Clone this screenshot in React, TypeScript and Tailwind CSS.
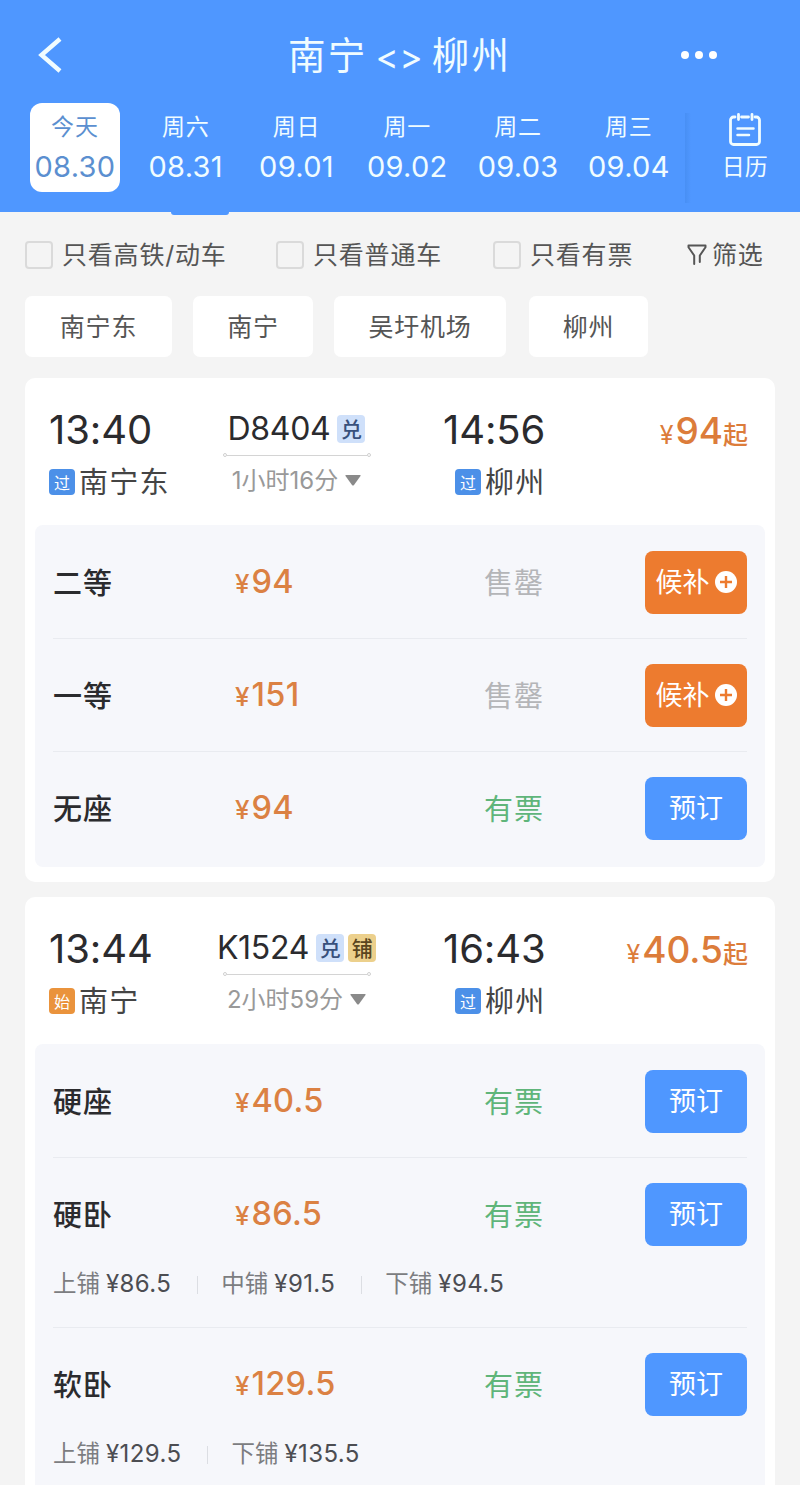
import React from 'react';
import { clsx } from 'clsx';

type Tag = { text: string; className: string };
type Berth = { name: string; price: string };
type Seat = { name: string; price: string; soldOut?: boolean; berths?: Berth[] };
type Stop = { time: string; mark: string; station: string };
type Train = {
  code: string;
  tags: Tag[];
  duration: string;
  from: Stop;
  to: Stop;
  lowest: string;
  seats: Seat[];
};

const DAYS = [
  { week: '今天', date: '08.30' },
  { week: '周六', date: '08.31' },
  { week: '周日', date: '09.01' },
  { week: '周一', date: '09.02' },
  { week: '周二', date: '09.03' },
  { week: '周三', date: '09.04' },
];

const FILTERS = [
  { label: '只看高铁/动车', className: 'w-[251px]' },
  { label: '只看普通车', className: 'w-[217px]' },
  { label: '只看有票', className: 'w-[194px]' },
];

const STATIONS = [
  { label: '南宁东', className: 'w-[147px]' },
  { label: '南宁', className: 'ml-[21px] w-[120px]' },
  { label: '吴圩机场', className: 'ml-[21px] w-[172px]' },
  { label: '柳州', className: 'ml-[23px] w-[119px]' },
];

const POINTS: Tag = { text: '兑', className: 'bg-[#cfe0fa] text-[#38507c]' };
const SLEEPER: Tag = { text: '铺', className: 'bg-[#ecd08c] text-[#5a4520]' };

const TRAINS: Train[] = [
  {
    code: 'D8404',
    tags: [POINTS],
    duration: '1小时16分',
    from: { time: '13:40', mark: '过', station: '南宁东' },
    to: { time: '14:56', mark: '过', station: '柳州' },
    lowest: '94',
    seats: [
      { name: '二等', price: '94', soldOut: true },
      { name: '一等', price: '151', soldOut: true },
      { name: '无座', price: '94' },
    ],
  },
  {
    code: 'K1524',
    tags: [POINTS, SLEEPER],
    duration: '2小时59分',
    from: { time: '13:44', mark: '始', station: '南宁' },
    to: { time: '16:43', mark: '过', station: '柳州' },
    lowest: '40.5',
    seats: [
      { name: '硬座', price: '40.5' },
      {
        name: '硬卧',
        price: '86.5',
        berths: [
          { name: '上铺', price: '86.5' },
          { name: '中铺', price: '91.5' },
          { name: '下铺', price: '94.5' },
        ],
      },
      {
        name: '软卧',
        price: '129.5',
        berths: [
          { name: '上铺', price: '129.5' },
          { name: '下铺', price: '135.5' },
        ],
      },
    ],
  },
];

const CalendarIcon = () => (
  <svg width="34" height="34" viewBox="0 0 34 34" fill="none" stroke="currentColor" strokeWidth="2.8" strokeLinecap="round">
    <path d="M7 4H5.500a3 3 0 0 0-3 3v21.500a3 3 0 0 0 3 3h23a3 3 0 0 0 3-3V7a3 3 0 0 0-3-3h-1.500M13.500 4h7" />
    <path d="M10.500 1.500v5M24 1.500v5" />
    <path d="M9.500 15.500h16M9.500 22h11.500" strokeWidth="2.500" />
  </svg>
);

const FilterIcon = () => (
  <svg width="20" height="22" viewBox="0 0 20 22" fill="none" stroke="currentColor" strokeWidth="2" strokeLinejoin="round" strokeLinecap="round">
    <path d="M7.200 20V11.500L1.500 3.300V1.500h17v1.800L12.800 11.500V18" />
  </svg>
);

const PlusBadge = () => (
  <svg width="22" height="22" viewBox="0 0 22 22">
    <circle cx="11" cy="11" r="11" fill="#fff" />
    <path d="M11 5v12M5 11h12" stroke="#ed7b2f" strokeWidth="2.400" />
  </svg>
);

const Header = () => (
  <header className="relative h-[212px] bg-[#4f97ff] text-[#f0fcff]">
    <div className="flex h-[103px] items-center pt-[6px]">
      <svg className="ml-[38px]" width="24" height="36" viewBox="0 0 24 36" fill="none" stroke="currentColor" strokeWidth="4.400">
        <path d="M22 2L3.500 18L22 34" />
      </svg>
      <h1 className="ml-[226px] flex w-[226px] items-center pt-[2px] text-[37.500px] leading-none">
        <span className="tracking-[2.200px]">南宁</span>
        <span className="ml-[8px] pt-[2px] text-[35px] leading-none tracking-[1px]">&lt;&gt;</span>
        <span className="ml-[8px] tracking-[2.200px]">柳州</span>
      </h1>
      <div className="ml-[167px] flex gap-[6px]">
        <i className="size-[8px] rounded-full bg-white" />
        <i className="size-[8px] rounded-full bg-white" />
        <i className="size-[8px] rounded-full bg-white" />
      </div>
    </div>
    <div className="flex h-[89px] pl-[20px]">
      {DAYS.map((day, i) => (
        <div key={day.date} className="flex w-[110.800px] justify-center">
          <div
            className={clsx(
              'flex w-[90px] flex-col items-center rounded-[12px] pt-[12px]',
              i === 0 && 'bg-white text-[#5b8fd0]',
            )}
          >
            <span className="mr-px text-[23px] leading-[24px] tracking-[0.800px]">{day.week}</span>
            <span className="mt-[12px] mr-px text-[29px] leading-[32px] tracking-[0.300px]">{day.date}</span>
          </div>
        </div>
      ))}
      <div className="mt-[10px] h-[90px] w-[6px] bg-linear-to-r from-[#488ff4] to-[#4f97ff]" />
      <div className="ml-[31px] flex flex-col items-center pt-[10px]">
        <CalendarIcon />
        <span className="mt-[8px] text-[23px] leading-[24px]">日历</span>
      </div>
    </div>
    <div className="absolute top-[212px] left-[171px] h-[3px] w-[58px] rounded-b-[3px] bg-[#4f97ff]" />
  </header>
);

const StationMark = ({ mark }: { mark: string }) => (
  <span
    className={clsx(
      'flex size-[26px] items-center justify-center rounded-[4px] pt-px text-[16px] leading-none text-white',
      mark === '始' ? 'bg-[#ea933c]' : 'bg-[#4c90e8]',
    )}
  >
    {mark}
  </span>
);

const StopInfo = ({ stop, className }: { stop: Stop; className?: string }) => (
  <div>
    <p className="text-[40px] leading-[48px] tracking-[-0.100px] text-[#2b2b2e]">{stop.time}</p>
    <div className={clsx('mt-[14px] flex items-center gap-[4px]', className)}>
      <StationMark mark={stop.mark} />
      <span className="pt-[2px] text-[29px] leading-[26px] tracking-[1.200px] text-[#444]">{stop.station}</span>
    </div>
  </div>
);

const SeatRow = ({ seat, last }: { seat: Seat; last: boolean }) => (
  <div className={clsx('mx-[18px]', !last && 'border-b border-[#e9ebf0]')}>
    <div className="flex h-[112px] items-center">
      <span className="w-[182px] pt-[3px] text-[29px] font-medium tracking-[1px] text-[#2b2b2e]">{seat.name}</span>
      <span className="flex w-[249px] items-baseline gap-[2px] pt-px font-medium text-[#db8143]">
        <span className="text-[26px]">¥</span>
        <span className="text-[32.500px] tracking-[0.300px]">{seat.price}</span>
      </span>
      <span
        className={clsx(
          'w-[161px] pt-[3px] text-[29px] tracking-[1px]',
          seat.soldOut ? 'text-[#b4b5b8]' : 'text-[#5fb57a]',
        )}
      >
        {seat.soldOut ? '售罄' : '有票'}
      </span>
      <button
        className={clsx(
          'flex h-[63px] w-[102px] shrink-0 items-center justify-center gap-[5px] rounded-[8px] text-[27px] text-white',
          seat.soldOut ? 'bg-[#ed7b2f]' : 'bg-[#4f97ff]',
        )}
      >
        <span className="pt-[3px]">{seat.soldOut ? '候补' : '预订'}</span>
        {seat.soldOut && <PlusBadge />}
      </button>
    </div>
    {seat.berths && (
      <div className="flex h-[57px] items-start">
        {seat.berths.map((berth, i) => (
          <React.Fragment key={berth.name}>
            {i > 0 && <i className="mt-[6px] mr-[23px] ml-[26px] h-[18px] w-px bg-[#dcdee3]" />}
            <span className="flex items-center gap-[6px] leading-[26px]">
              <span className="pt-px text-[23.500px] text-[#7c7d81]">{berth.name}</span>
              <span className="text-[24px] tracking-[0.400px] text-[#4c4d52]">¥{berth.price}</span>
            </span>
          </React.Fragment>
        ))}
      </div>
    )}
  </div>
);

const TrainCard = ({ train }: { train: Train }) => (
  <section className="rounded-[10px] bg-white px-[10px] pb-[15px]">
    <div className="flex h-[147px] pt-[28px] pl-[14px]">
      <div className="w-[156px]">
        <StopInfo stop={train.from} />
      </div>
      <div className="flex w-[183px] flex-col items-center">
        <div className="flex h-[46px] items-center gap-[7px] text-[32px] tracking-[-0.300px] text-[#2b2b2e]">
          {train.code}
          <span className="flex gap-[4px]">
            {train.tags.map((tag) => (
              <span
                key={tag.text}
                className={clsx('flex size-[28px] items-center justify-center rounded-[4px] pt-px text-[21px] leading-none font-medium', tag.className)}
              >
                {tag.text}
              </span>
            ))}
          </span>
        </div>
        <div className="mt-px flex items-center">
          <i className="size-[4px] rounded-full border border-[#d0d0d0]" />
          <i className="h-px w-[140px] bg-[#d4d4d4]" />
          <i className="size-[4px] rounded-full border border-[#d0d0d0]" />
        </div>
        <div className="mt-[8px] flex items-center gap-[7px] text-[24px] leading-[28px] text-[#999]">
          <span className="pt-[2px]">{train.duration}</span>
          <svg width="16" height="11" viewBox="0 0 16 11" fill="#8a8a8a">
            <path d="M1 0h14q1 0 .500 1L9 10q-1 1-2 0L.500 1Q0 0 1 0z" />
          </svg>
        </div>
      </div>
      <div className="ml-[55px] w-[140px]">
        <StopInfo stop={train.to} className="pl-[12px]" />
      </div>
      <p className="mr-[17px] ml-auto flex items-baseline self-start font-medium text-[#dc7c3a]">
        <span className="mr-[2px] text-[25px] font-normal">¥</span>
        <span className="text-[37px] leading-[50px]">{train.lowest}</span>
        <span className="text-[25px]">起</span>
      </p>
    </div>
    <div className="rounded-[8px] bg-[#f6f7fb] pt-px pb-[3px]">
      {train.seats.map((seat, i) => (
        <SeatRow key={seat.name} seat={seat} last={i === train.seats.length - 1} />
      ))}
    </div>
  </section>
);

export default function App() {
  return (
    <div className="h-[1485px] w-[800px] overflow-hidden bg-[#f4f4f4] font-[Inter,'Noto_Sans_CJK_SC',sans-serif]">
      <Header />
      <div className="flex h-[84px] items-center pt-px pl-[25px] text-[25px] text-[#555]">
        {FILTERS.map((f) => (
          <label key={f.label} className={clsx('flex items-center gap-[9px] tracking-[0.800px] whitespace-nowrap', f.className)}>
            <span className="size-[28px] shrink-0 rounded-[4px] border-2 border-[#dadada]" />
            <span className="pt-[2px]">{f.label}</span>
          </label>
        ))}
        <span className="flex items-center gap-[5px] tracking-[0.800px]">
          <FilterIcon />
          <span className="pt-[2px]">筛选</span>
        </span>
      </div>
      <div className="flex h-[61px] pl-[25px]">
        {STATIONS.map((s) => (
          <button
            key={s.label}
            className={clsx('rounded-[7px] bg-white pt-[2px] text-[25px] tracking-[0.800px] text-[#555]', s.className)}
          >
            {s.label}
          </button>
        ))}
      </div>
      <main className="mx-[25px] mt-[21px] flex flex-col gap-[15px]">
        {TRAINS.map((train) => (
          <TrainCard key={train.code} train={train} />
        ))}
      </main>
    </div>
  );
}
